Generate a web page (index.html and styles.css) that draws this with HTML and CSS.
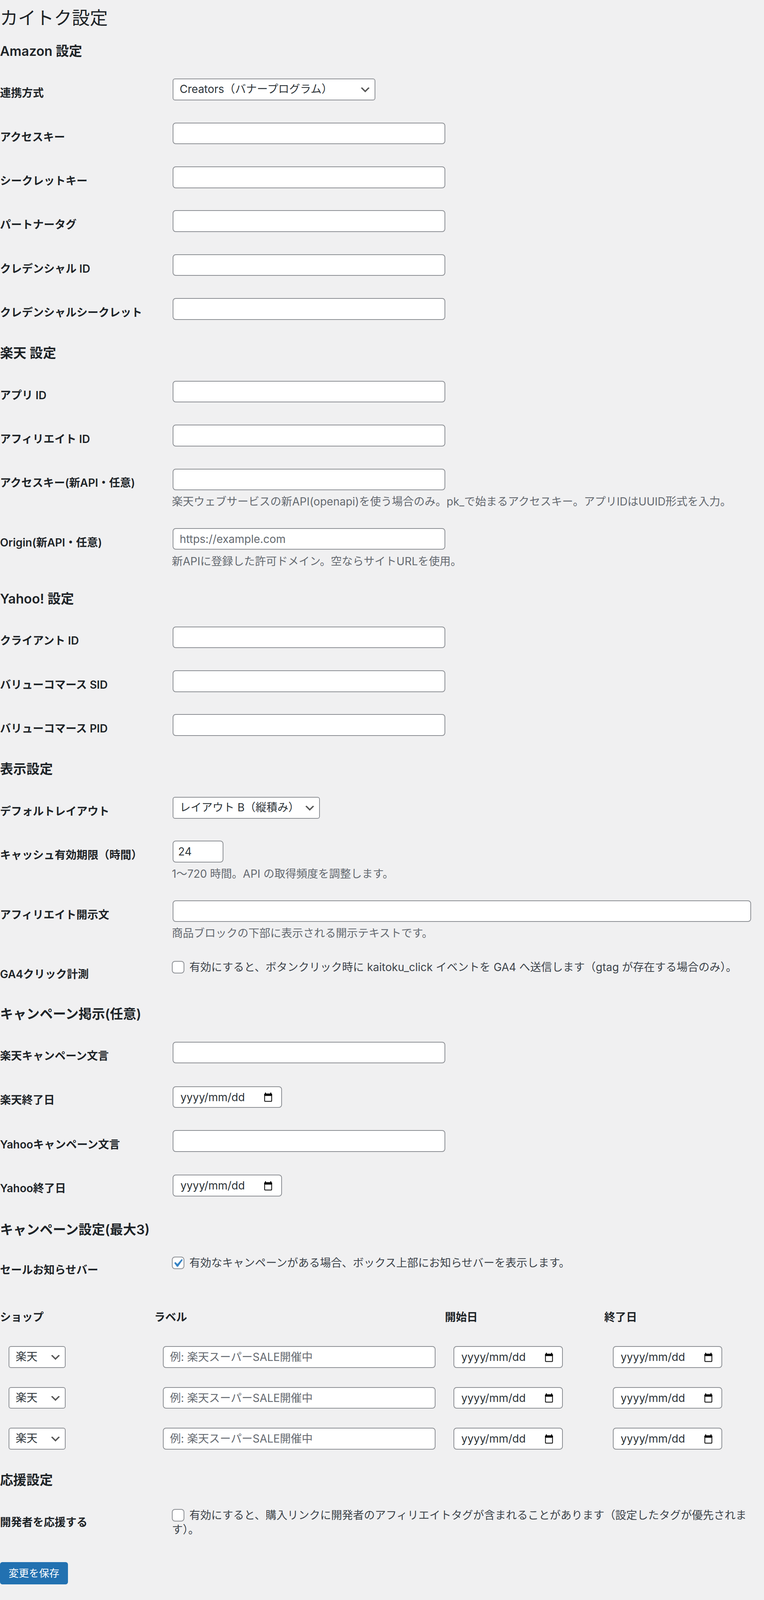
FILE: index.html
```html
<!DOCTYPE html>
<html lang="ja">
<head>
<meta charset="utf-8">
<title>カイトク設定</title>
<link rel="stylesheet" href="styles.css">
</head>
<body>
<div class="wrap">
  <h1 class="page-title">カイトク設定</h1>
  <form class="settings" action="#">

    <h2 class="section-title first">Amazon 設定</h2>
    <div class="form-table">
      <div class="row">
        <div class="label">連携方式</div>
        <div class="field">
          <span class="select-wrap"><select class="select select-method"><option>Creators（バナープログラム）</option></select><svg class="select-arrow" viewBox="0 0 20 20" aria-hidden="true"><path d="M5 6l5 5 5-5 2 1-7 7-7-7 2-1z"/></svg></span>
        </div>
      </div>
      <div class="row"><div class="label">アクセスキー</div><div class="field"><input class="text-input regular-text" type="text"></div></div>
      <div class="row"><div class="label">シークレットキー</div><div class="field"><input class="text-input regular-text" type="text"></div></div>
      <div class="row"><div class="label">パートナータグ</div><div class="field"><input class="text-input regular-text" type="text"></div></div>
      <div class="row"><div class="label">クレデンシャル ID</div><div class="field"><input class="text-input regular-text" type="text"></div></div>
      <div class="row"><div class="label">クレデンシャルシークレット</div><div class="field"><input class="text-input regular-text" type="text"></div></div>
    </div>

    <h2 class="section-title">楽天 設定</h2>
    <div class="form-table">
      <div class="row"><div class="label">アプリ ID</div><div class="field"><input class="text-input regular-text" type="text"></div></div>
      <div class="row"><div class="label">アフィリエイト ID</div><div class="field"><input class="text-input regular-text" type="text"></div></div>
      <div class="row">
        <div class="label">アクセスキー(新API・任意)</div>
        <div class="field has-desc">
          <input class="text-input regular-text" type="text">
          <p class="desc">楽天ウェブサービスの新API(openapi)を使う場合のみ。pk_で始まるアクセスキー。アプリIDはUUID形式を入力。</p>
        </div>
      </div>
      <div class="row">
        <div class="label">Origin(新API・任意)</div>
        <div class="field has-desc">
          <input class="text-input regular-text" type="text" placeholder="https://example.com">
          <p class="desc">新APIに登録した許可ドメイン。空ならサイトURLを使用。</p>
        </div>
      </div>
    </div>

    <h2 class="section-title">Yahoo! 設定</h2>
    <div class="form-table">
      <div class="row"><div class="label">クライアント ID</div><div class="field"><input class="text-input regular-text" type="text"></div></div>
      <div class="row"><div class="label">バリューコマース SID</div><div class="field"><input class="text-input regular-text" type="text"></div></div>
      <div class="row"><div class="label">バリューコマース PID</div><div class="field"><input class="text-input regular-text" type="text"></div></div>
    </div>

    <h2 class="section-title">表示設定</h2>
    <div class="form-table">
      <div class="row">
        <div class="label">デフォルトレイアウト</div>
        <div class="field">
          <span class="select-wrap"><select class="select select-layout"><option>レイアウト B（縦積み）</option></select><svg class="select-arrow" viewBox="0 0 20 20" aria-hidden="true"><path d="M5 6l5 5 5-5 2 1-7 7-7-7 2-1z"/></svg></span>
        </div>
      </div>
      <div class="row">
        <div class="label">キャッシュ有効期限（時間）</div>
        <div class="field has-desc">
          <input class="text-input small-text" type="number" value="24">
          <p class="desc">1〜720 時間。API の取得頻度を調整します。</p>
        </div>
      </div>
      <div class="row">
        <div class="label">アフィリエイト開示文</div>
        <div class="field has-desc">
          <input class="text-input large-text" type="text">
          <p class="desc">商品ブロックの下部に表示される開示テキストです。</p>
        </div>
      </div>
      <div class="row">
        <div class="label">GA4クリック計測</div>
        <div class="field check-field">
          <label class="check"><span class="checkbox-wrap"><input class="checkbox" type="checkbox"></span> 有効にすると、ボタンクリック時に kaitoku_click イベントを GA4 へ送信します（gtag が存在する場合のみ）。</label>
        </div>
      </div>
    </div>

    <h2 class="section-title">キャンペーン掲示(任意)</h2>
    <div class="form-table">
      <div class="row"><div class="label">楽天キャンペーン文言</div><div class="field"><input class="text-input regular-text" type="text"></div></div>
      <div class="row">
        <div class="label">楽天終了日</div>
        <div class="field"><div class="date-input"><span class="date-text">yyyy/mm/dd</span><svg class="cal-icon" viewBox="0 0 21 24" aria-hidden="true"><rect x="2.5" y="0" width="2.5" height="4"/><rect x="16" y="0" width="2.5" height="4"/><rect x="0.5" y="2.5" width="20" height="6" rx="2"/><rect x="1.5" y="4" width="18" height="18.5" rx="1.8" fill="none" stroke="#000" stroke-width="2"/></svg></div></div>
      </div>
      <div class="row"><div class="label">Yahooキャンペーン文言</div><div class="field"><input class="text-input regular-text" type="text"></div></div>
      <div class="row">
        <div class="label">Yahoo終了日</div>
        <div class="field"><div class="date-input"><span class="date-text">yyyy/mm/dd</span><svg class="cal-icon" viewBox="0 0 21 24" aria-hidden="true"><rect x="2.5" y="0" width="2.5" height="4"/><rect x="16" y="0" width="2.5" height="4"/><rect x="0.5" y="2.5" width="20" height="6" rx="2"/><rect x="1.5" y="4" width="18" height="18.5" rx="1.8" fill="none" stroke="#000" stroke-width="2"/></svg></div></div>
      </div>
    </div>

    <h2 class="section-title">キャンペーン設定(最大3)</h2>
    <div class="form-table">
      <div class="row">
        <div class="label label-tight">セールお知らせバー</div>
        <div class="field check-field check-tight">
          <label class="check"><span class="checkbox-wrap"><input class="checkbox" type="checkbox" checked><svg class="check-mark" viewBox="0 0 20 20" aria-hidden="true"><path d="M14.83 4.89l1.34.94-5.81 8.38H9.02L5.78 9.67l1.34-1.25 2.57 2.4z"/></svg></span> 有効なキャンペーンがある場合、ボックス上部にお知らせバーを表示します。</label>
        </div>
      </div>
    </div>

    <div class="campaign-table">
      <div class="ct-head">ショップ</div>
      <div class="ct-head">ラベル</div>
      <div class="ct-head">開始日</div>
      <div class="ct-head">終了日</div>

      <div class="ct-cell"><span class="select-wrap"><select class="select select-shop"><option>楽天</option><option>Yahoo</option></select><svg class="select-arrow" viewBox="0 0 20 20" aria-hidden="true"><path d="M5 6l5 5 5-5 2 1-7 7-7-7 2-1z"/></svg></span></div>
      <div class="ct-cell"><input class="text-input regular-text" type="text" placeholder="例: 楽天スーパーSALE開催中"></div>
      <div class="ct-cell"><div class="date-input flat"><span class="date-text">yyyy/mm/dd</span><svg class="cal-icon" viewBox="0 0 21 24" aria-hidden="true"><rect x="2.5" y="0" width="2.5" height="4"/><rect x="16" y="0" width="2.5" height="4"/><rect x="0.5" y="2.5" width="20" height="6" rx="2"/><rect x="1.5" y="4" width="18" height="18.5" rx="1.8" fill="none" stroke="#000" stroke-width="2"/></svg></div></div>
      <div class="ct-cell"><div class="date-input flat"><span class="date-text">yyyy/mm/dd</span><svg class="cal-icon" viewBox="0 0 21 24" aria-hidden="true"><rect x="2.5" y="0" width="2.5" height="4"/><rect x="16" y="0" width="2.5" height="4"/><rect x="0.5" y="2.5" width="20" height="6" rx="2"/><rect x="1.5" y="4" width="18" height="18.5" rx="1.8" fill="none" stroke="#000" stroke-width="2"/></svg></div></div>

      <div class="ct-cell"><span class="select-wrap"><select class="select select-shop"><option>楽天</option><option>Yahoo</option></select><svg class="select-arrow" viewBox="0 0 20 20" aria-hidden="true"><path d="M5 6l5 5 5-5 2 1-7 7-7-7 2-1z"/></svg></span></div>
      <div class="ct-cell"><input class="text-input regular-text" type="text" placeholder="例: 楽天スーパーSALE開催中"></div>
      <div class="ct-cell"><div class="date-input flat"><span class="date-text">yyyy/mm/dd</span><svg class="cal-icon" viewBox="0 0 21 24" aria-hidden="true"><rect x="2.5" y="0" width="2.5" height="4"/><rect x="16" y="0" width="2.5" height="4"/><rect x="0.5" y="2.5" width="20" height="6" rx="2"/><rect x="1.5" y="4" width="18" height="18.5" rx="1.8" fill="none" stroke="#000" stroke-width="2"/></svg></div></div>
      <div class="ct-cell"><div class="date-input flat"><span class="date-text">yyyy/mm/dd</span><svg class="cal-icon" viewBox="0 0 21 24" aria-hidden="true"><rect x="2.5" y="0" width="2.5" height="4"/><rect x="16" y="0" width="2.5" height="4"/><rect x="0.5" y="2.5" width="20" height="6" rx="2"/><rect x="1.5" y="4" width="18" height="18.5" rx="1.8" fill="none" stroke="#000" stroke-width="2"/></svg></div></div>

      <div class="ct-cell"><span class="select-wrap"><select class="select select-shop"><option>楽天</option><option>Yahoo</option></select><svg class="select-arrow" viewBox="0 0 20 20" aria-hidden="true"><path d="M5 6l5 5 5-5 2 1-7 7-7-7 2-1z"/></svg></span></div>
      <div class="ct-cell"><input class="text-input regular-text" type="text" placeholder="例: 楽天スーパーSALE開催中"></div>
      <div class="ct-cell"><div class="date-input flat"><span class="date-text">yyyy/mm/dd</span><svg class="cal-icon" viewBox="0 0 21 24" aria-hidden="true"><rect x="2.5" y="0" width="2.5" height="4"/><rect x="16" y="0" width="2.5" height="4"/><rect x="0.5" y="2.5" width="20" height="6" rx="2"/><rect x="1.5" y="4" width="18" height="18.5" rx="1.8" fill="none" stroke="#000" stroke-width="2"/></svg></div></div>
      <div class="ct-cell"><div class="date-input flat"><span class="date-text">yyyy/mm/dd</span><svg class="cal-icon" viewBox="0 0 21 24" aria-hidden="true"><rect x="2.5" y="0" width="2.5" height="4"/><rect x="16" y="0" width="2.5" height="4"/><rect x="0.5" y="2.5" width="20" height="6" rx="2"/><rect x="1.5" y="4" width="18" height="18.5" rx="1.8" fill="none" stroke="#000" stroke-width="2"/></svg></div></div>
    </div>

    <h2 class="section-title">応援設定</h2>
    <div class="form-table">
      <div class="row">
        <div class="label">開発者を応援する</div>
        <div class="field check-field">
          <label class="check"><span class="checkbox-wrap"><input class="checkbox" type="checkbox"></span> 有効にすると、購入リンクに開発者のアフィリエイトタグが含まれることがあります（設定したタグが優先されます）。</label>
        </div>
      </div>
    </div>

    <p class="submit"><button class="button-primary" type="button">変更を保存</button></p>
  </form>
</div>
</body>
</html>
```

FILE: styles.css
```css
html {
  background: #f0f0f1;
}

body {
  margin: 0;
  background: #f0f0f1;
  color: #3c434a;
  font-family: Inter, "Noto Sans CJK JP", sans-serif;
  font-size: 26px;
  line-height: 34.5px;
}

.wrap {
  padding-bottom: 10px;
}

.page-title {
  margin: 0;
  padding: 17.1px 0 7.6px;
  font-size: 46px;
  font-weight: 400;
  line-height: 56.75px;
  color: #1d2327;
}

.settings {
  margin: 0;
}

.section-title {
  margin: 39.86px 0 24.96px;
  font-size: 33.8px;
  font-weight: 600;
  line-height: 34.54px;
  color: #1d2327;
}

.section-title.first {
  margin-top: 32.08px;
}

.form-table {
  display: flex;
  flex-direction: column;
}

.row {
  display: flex;
  align-items: flex-start;
}

.label {
  flex: 0 0 400px;
  padding: 48.2px 20px 27.33px 0;
  font-size: 28px;
  font-weight: 600;
  line-height: 34.54px;
  color: #1d2327;
}

.label.label-tight {
  padding-top: 43px;
}

.field {
  flex: 1 1 auto;
  min-width: 0;
  display: flex;
  flex-direction: column;
  align-items: flex-start;
  padding: 28.38px 20px;
  font-size: 28px;
  line-height: 34.54px;
}

.field.has-desc {
  padding-bottom: 21.73px;
}

.field.check-field {
  display: block;
  padding-top: 29.42px;
  padding-bottom: 28.47px;
}

.field.check-field.check-tight {
  padding-top: 24.2px;
}

.text-input {
  box-sizing: border-box;
  height: 55.6px;
  margin: 0 2px;
  padding: 0 16px;
  border: 2px solid #8c8f94;
  border-radius: 8px;
  background: #fff;
  box-shadow: none;
  color: #2c3338;
  font-family: inherit;
  font-size: 28px;
  line-height: 51.6px;
  outline: none;
}

.text-input::placeholder {
  color: #646970;
  opacity: 1;
}

.regular-text {
  width: 698px;
}

.large-text {
  width: 99%;
}

.small-text {
  width: 130px;
  padding: 0 0 0 12px;
  -moz-appearance: textfield;
}

.small-text::-webkit-inner-spin-button,
.small-text::-webkit-outer-spin-button {
  -webkit-appearance: none;
  margin: 0;
}

.desc {
  margin: 12.15px 0 0;
  font-size: 28px;
  line-height: 34.54px;
  color: #646970;
}

.select-wrap {
  position: relative;
  display: block;
  margin: 0 2px;
}

.select {
  display: block;
  box-sizing: border-box;
  height: 55.6px;
  margin: 0;
  padding: 0 48px 0 16px;
  border: 2px solid #8c8f94;
  border-radius: 6px;
  background: #fff;
  color: #2c3338;
  font-family: inherit;
  font-size: 28px;
  line-height: 51.6px;
  -webkit-appearance: none;
  appearance: none;
  outline: none;
}

.select-method {
  width: 519px;
}

.select-layout {
  width: 377px;
}

.select-shop {
  width: 146px;
}

.select-arrow {
  position: absolute;
  right: 10px;
  top: 13px;
  width: 32px;
  height: 32px;
  fill: #555;
  pointer-events: none;
}

.date-input {
  display: flex;
  align-items: center;
  justify-content: space-between;
  box-sizing: border-box;
  width: 280px;
  height: 55.6px;
  margin: 1.9px 2px 0;
  padding: 0 23px 0 18px;
  border: 2px solid #8c8f94;
  border-radius: 8px;
  background: #fff;
  color: #2c3338;
  font-size: 28px;
  line-height: 1;
}

.date-input.flat {
  margin-top: 0;
}

.cal-icon {
  width: 21px;
  height: 24px;
  margin-top: 1.5px;
  fill: #000;
}

.check {
  display: block;
  font-size: 28px;
  line-height: 37.2px;
  color: #3c434a;
}

.checkbox-wrap {
  position: relative;
  display: inline-block;
  width: 32px;
  height: 32px;
  margin: 2.28px 4.8px 0 0;
  vertical-align: top;
}

.checkbox {
  display: block;
  box-sizing: border-box;
  width: 32px;
  height: 32px;
  margin: 0;
  border: 2px solid #8c8f94;
  border-radius: 8px;
  background: #fff;
  -webkit-appearance: none;
  appearance: none;
  outline: none;
}

.check-mark {
  position: absolute;
  left: -6px;
  top: -4px;
  width: 42px;
  height: 42px;
  fill: #3582c4;
  pointer-events: none;
}

.campaign-table {
  display: grid;
  grid-template-columns: 395px 744px 408px 1fr;
  margin-top: 39.86px;
}

.ct-head {
  padding: 19.55px 0 32.55px;
  font-size: 28px;
  font-weight: 600;
  line-height: 34.54px;
  color: #1d2327;
}

.ct-cell {
  display: flex;
  align-items: flex-start;
  padding: 24.39px 20px 24.48px;
}

.campaign-table + .section-title {
  margin-top: 36.54px;
}

.submit {
  margin: 0;
  padding: 35.59px 0 0;
}

.button-primary {
  display: inline-block;
  box-sizing: border-box;
  height: 57px;
  margin: 0;
  padding: 0 20px;
  border: 2px solid #2271b1;
  border-radius: 6px;
  background: #2271b1;
  color: #fff;
  font-family: inherit;
  font-size: 26px;
  line-height: 53px;
  vertical-align: top;
  cursor: pointer;
}
```
